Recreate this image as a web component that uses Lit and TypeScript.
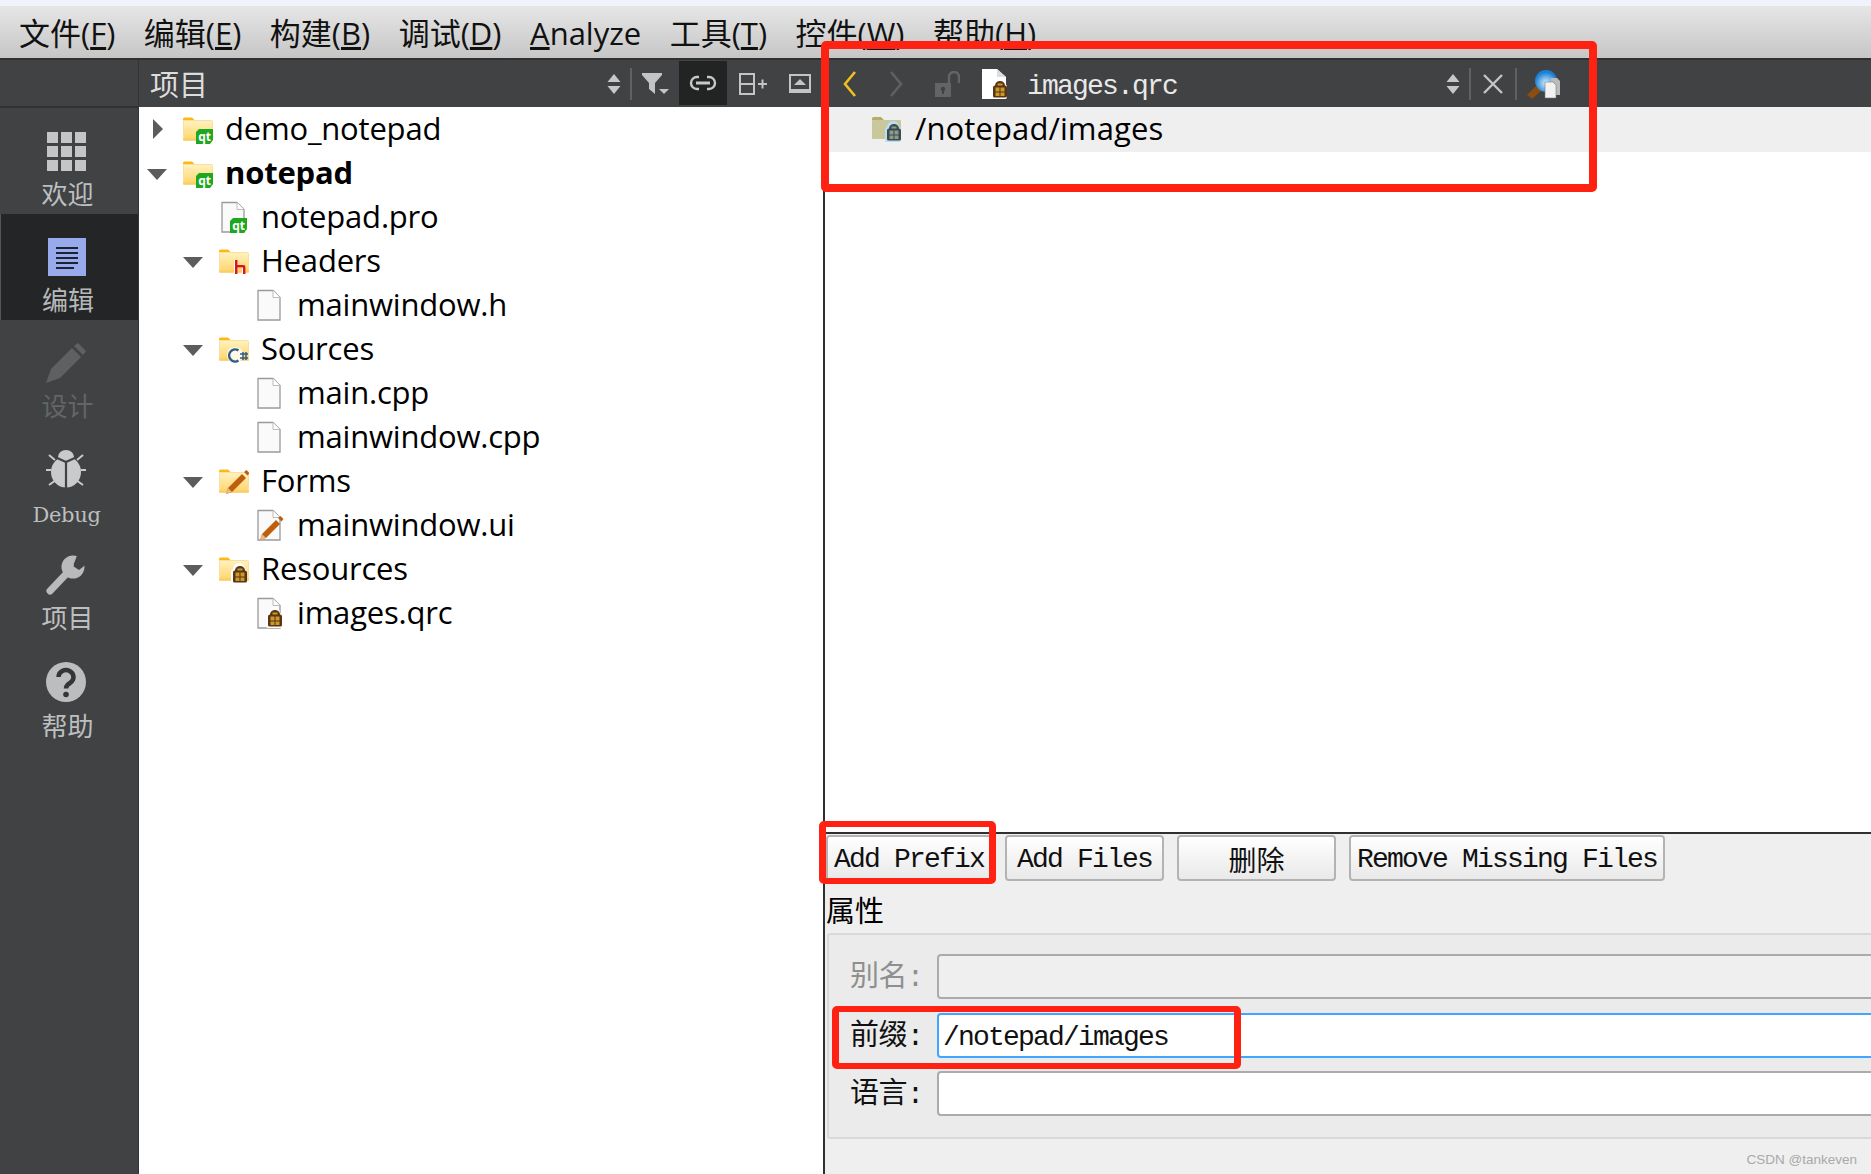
import { LitElement, html, css, svg } from "lit";
import { customElement } from "lit/decorators.js";

const badge = (x: number, y: number, dark = "#5b3413", pane = "#c79a2a", halo = "#fff") => svg`
  <g transform="translate(${x} ${y})">
    <path d="M-1 17V7a3 3 0 0 1 2-3 6 6 0 0 1 12 0 3 3 0 0 1 2 3v10a2 2 0 0 1-2 2H1a2 2 0 0 1-2-2z" fill=${halo}/>
    <path d="M1 16V7.500a2 2 0 0 1 2-2 5 4.500 0 0 1 10 0 2 2 0 0 1 2 2V16a1.500 1.500 0 0 1-1.500 1.500h-11A1.500 1.500 0 0 1 1 16z" fill=${dark}/>
    <rect x="3.500" y="7.500" width="4" height="4" fill=${pane}/><rect x="8.500" y="7.500" width="4" height="4" fill=${pane}/>
    <rect x="3.500" y="12.500" width="4" height="3.500" fill=${pane}/><rect x="8.500" y="12.500" width="4" height="3.500" fill=${pane}/>
    <rect x="5.500" y="3.500" width="5" height="2" fill=${pane}/>
  </g>`;

const qt = (x: number, y: number) => svg`
  <g transform="translate(${x} ${y})">
    <path d="M3 0h14v11l-3 4H0V3z" fill="#1fa81f"/>
    <text x="8.500" y="11.500" font-size="12" font-weight="700" text-anchor="middle" fill="#fff" font-family="Open Sans, sans-serif">qt</text>
  </g>`;

const folderBase = (inner = svg``) => svg`
  <svg class="ficon" width="30" height="30" viewBox="0 0 30 30">
    <defs><linearGradient id="fg" x1="0" y1="0" x2="0" y2="1"><stop offset="0" stop-color="#fff2c0"/><stop offset="1" stop-color="#ffd468"/></linearGradient></defs>
    <path d="M0 5a1.500 1.500 0 0 1 1.500-1.500H9l3 3H0z" fill="#fdb913"/>
    <rect x="0.500" y="6.500" width="29" height="20" rx="1" fill="url(#fg)" stroke="#fbdf9a"/>
    <rect x="0" y="24.500" width="30" height="2" fill="#f8cf62"/>
    ${inner}
  </svg>`;

const docBase = (inner = svg``) => svg`
  <svg class="ficon doc" width="28" height="32" viewBox="0 0 28 32">
    <path d="M1 1.500h15l7 7V31H1z" fill="#fafafa" stroke="#9a9a9a" stroke-width="1.300"/>
    <path d="M16 1.500v7h7" fill="#fff" stroke="#bdbdbd"/>
    ${inner}
  </svg>`;

const pen = (x: number, y: number) => svg`
  <g transform="translate(${x} ${y})">
    <path d="M0 24l2-6L16 4l4 4L6 22z" fill="#bf5f0c"/>
    <path d="M18 2l2.500-2 3 3-2 2.500z" fill="#bf5f0c"/>
    <path d="M0 24l2-6 4 4z" fill="#e9b98a"/>
  </g>`;

const ICONS: Record<string, unknown> = {
  qtfolder: folderBase(qt(13, 15)),
  hfolder: folderBase(svg`<path d="M15 27V14h3.500v13zM18 19h6.500a2 2 0 0 1 2 2v6H23v-5h-5z" fill="#fff"/><path d="M16 28V14h2.500v5h6a2 2 0 0 1 2 2v7H24v-6.500h-5.500V28z" fill="#e01414"/>`),
  cfolder: folderBase(svg`
    <circle cx="16" cy="21" r="8" fill="#fff" opacity=".8"/>
    <path d="M19.500 16.500a6 6 0 1 0 0 10" fill="none" stroke="#2f5f88" stroke-width="2.500"/>
    <path d="M21 20h8M21 24h8M24 18v8M27 18v8" stroke="#2f5f88" stroke-width="1.500"/>`),
  formfolder: folderBase(pen(7, 4)),
  resfolder: folderBase(badge(13, 11)),
  doc: docBase(),
  qtdoc: docBase(qt(9, 17)),
  uidoc: docBase(pen(3, 7)),
  qrcdoc: docBase(svg`<g transform="translate(10 12)">${badge(0, 0)}</g>`),
};

const tree = [
  { t: "demo_notepad", l: 0, i: "qtfolder", a: "r" },
  { t: "notepad", l: 0, i: "qtfolder", a: "d", b: true },
  { t: "notepad.pro", l: 1, i: "qtdoc" },
  { t: "Headers", l: 1, i: "hfolder", a: "d" },
  { t: "mainwindow.h", l: 2, i: "doc" },
  { t: "Sources", l: 1, i: "cfolder", a: "d" },
  { t: "main.cpp", l: 2, i: "doc" },
  { t: "mainwindow.cpp", l: 2, i: "doc" },
  { t: "Forms", l: 1, i: "formfolder", a: "d" },
  { t: "mainwindow.ui", l: 2, i: "uidoc" },
  { t: "Resources", l: 1, i: "resfolder", a: "d" },
  { t: "images.qrc", l: 2, i: "qrcdoc" },
];

const grid = () => {
  const out = [];
  for (let r = 0; r < 3; r++) for (let c = 0; c < 3; c++)
    out.push(svg`<rect x=${1 + c * 14} y=${1 + r * 14} width="11" height="11" fill="#c4c5c6"/>`);
  return svg`<svg width="40" height="40" viewBox="0 0 40 40">${out}</svg>`;
};
const editIcon = svg`<svg width="40" height="40" viewBox="0 0 40 40">
  <rect x="1" y="1" width="38" height="38" fill="#98a9ec"/>
  <path d="M9 11h22M9 16h22M9 21h22M9 26h22M9 31h18" stroke="#1d2230" stroke-width="2"/></svg>`;
const penIcon = svg`<svg width="40" height="40" viewBox="0 0 40 40">
  <path d="M0 40l5-14L26 5l9 9-21 21z" fill="#5f6062"/><path d="M28 3l4-3 8 8-3 4z" fill="#5f6062"/></svg>`;
const bugIcon = svg`<svg width="40" height="40" viewBox="0 0 40 40">
  <path d="M3 6l6 5M37 6l-6 5M0 21h5M35 21h5M3 36l7-5M37 36l-7-5" stroke="#c9cacb" stroke-width="2"/>
  <ellipse cx="20" cy="23" rx="15" ry="15.500" fill="#c9cacb"/>
  <ellipse cx="20" cy="8" rx="8" ry="7" fill="#c9cacb"/>
  <path d="M20 13v26M20 13L9 8M20 13l11-5" stroke="#404244" stroke-width="2.200" fill="none"/></svg>`;
const wrenchIcon = svg`<svg width="40" height="40" viewBox="0 0 40 40">
  <path d="M4 36L22 17" stroke="#b9babb" stroke-width="7" stroke-linecap="round"/>
  <circle cx="27" cy="12" r="11.500" fill="#b9babb"/>
  <path d="M27 11L32 -2H42V8L33 15z" fill="#404244"/><path d="M26 12l-1-10 3 9z" fill="#b9babb"/></svg>`;
const helpIcon = svg`<svg width="40" height="42" viewBox="0 0 40 42">
  <circle cx="20" cy="21" r="20" fill="#bcbdbe"/>
  <path d="M12.500 16a7.500 7 0 1 1 11.500 6c-2.500 1.500-4 2.500-4 5.500" fill="none" stroke="#343537" stroke-width="4.500"/>
  <circle cx="20" cy="33.500" r="2.800" fill="#343537"/></svg>`;

const nav = [
  { t: "欢迎", i: grid() },
  { t: "编辑", i: editIcon, sel: true },
  { t: "设计", i: penIcon, off: true },
  { t: "Debug", i: bugIcon },
  { t: "项目", i: wrenchIcon },
  { t: "帮助", i: helpIcon },
];

const arrows = svg`<svg class="arrows" width="14" height="20" viewBox="0 0 14 20"><path d="M7 0l6.500 8H.5zM7 20l6.500-8H.5z" fill="#c8c8c8"/></svg>`;

const menu = [
  ["文件(", "F", ")"], ["编辑(", "E", ")"], ["构建(", "B", ")"], ["调试(", "D", ")"],
  ["", "A", "nalyze"], ["工具(", "T", ")"], ["控件(", "W", ")"], ["帮助(", "H", ")"],
];

@customElement("app-root")
export class AppRoot extends LitElement {
  static styles = css`
    :host { display: block; position: relative; width: 1871px; height: 1174px; overflow: hidden; background: #fff;
      font-family: "Open Sans", "Noto Sans CJK SC", sans-serif; color: #000; }
    .strip { height: 6px; background: #eff3fb; }
    .menubar { height: 52px; box-sizing: border-box; display: flex; gap: 28.500px; padding-left: 19px; align-items: flex-start;
      background: linear-gradient(#e6e6e6, #c6c6c6); font-size: 31px; line-height: 54px; color: #111; white-space: nowrap; }
    .main { display: flex; height: 1114px; border-top: 2px solid #2f3031; box-sizing: content-box; }
    .side { width: 139px; flex: none; background: #404244; box-sizing: border-box; border-right: 1px solid #333; }
    .sidehead { height: 48px; box-sizing: border-box; border-bottom: 2px solid #303132; }
    .item { height: 106px; box-sizing: border-box; padding: 23px 6px 0 0; display: flex; flex-direction: column; align-items: center; }
    .item svg { display: block; flex: none; }
    .item span { margin: 11px 0 0 3px; font-size: 26px; line-height: 30px; color: #bdbebf; font-family: "Liberation Mono", "Noto Sans CJK SC", serif; }
    .item span.latin { font-family: "DejaVu Serif", serif; font-size: 21px; letter-spacing: -.3px; margin-left: 1px; }
    .item.sel { background: #232526; border-left: 1px solid #555; }
    .item.sel span { color: #b6b7b8; }
    .item.off span { color: #646566; }
    .left { width: 684px; flex: none; display: flex; flex-direction: column; border-right: 2px solid #2f3031; }
    .bar { height: 47px; flex: none; display: flex; align-items: center; background: #404244; color: #e4e4e4; box-sizing: border-box; }
    .title { flex: 1; padding-left: 11px; margin-top: -2px; font-size: 29px; color: #dcdcdc; }
    .bar svg { display: block; flex: none; }
    .sep { width: 2px; height: 32px; background: #5f6163; flex: none; }
    .ml10 { margin-left: 10px; } .ml12 { margin-left: 12px; } .ml22 { margin-left: 22px; } .ml21 { margin-left: 21px; }
    .ml9 { margin-left: 9px; } .ml18 { margin-left: 18px; } .ml32 { margin-left: 32px; }
    .linkbtn { width: 48px; height: 44px; background: #222424; margin-top: -1px; display: flex; align-items: center; justify-content: center; flex: none; }
    .tree { flex: 1; background: #fff; padding-left: 8px; }
    .row { height: 44px; display: flex; align-items: center; font-size: 31px; white-space: nowrap; letter-spacing: -.2px; }
    .row span { margin-top: -2px; }
    .row.l1 { margin-left: 36px; } .row.l2 { margin-left: 72px; }
    .row.bold { font-weight: 700; }
    .tw { width: 20px; height: 14px; flex: none; margin-right: 16px; display: flex; justify-content: center; }
    .ar-r { margin-top: -3px; }
    .ar-d { margin-top: 3px; }
    .iconbox { width: 30px; flex: none; display: flex; justify-content: flex-start; margin-right: 12px; }
    .ficon { display: block; }
    .doc { margin-left: 2px; }
    .right { flex: 1; min-width: 0; display: flex; flex-direction: column; }
    .file { width: 419px; flex: none; margin-left: 16px; padding-top: 5px; font-family: "Liberation Mono", monospace; font-size: 28px; letter-spacing: -1.800px; color: #e8e8e8; }
    .prefix { height: 45px; flex: none; background: #efefef; display: flex; align-items: center; padding-left: 47px; font-size: 31px; letter-spacing: .1px; white-space: nowrap; }
    .prefix span { margin-top: -3px; }
    .prefix svg { display: block; margin-right: 13px; flex: none; }
    .space { flex: 1; background: #fff; }
    .panel { height: 342px; flex: none; box-sizing: border-box; border-top: 2px solid #2f3031; background: #efefef; padding: 1px 0 0 1px; }
    .btns { display: flex; gap: 13px; height: 46px; }
    button { box-sizing: border-box; height: 46px; min-width: 159px; padding: 2px 6px 0; margin: 0; border: 2px solid #b3b3b3; border-radius: 4px;
      background: linear-gradient(#fff, #e9e9e9); font-family: "Liberation Mono", "Noto Sans CJK SC", monospace; font-size: 28px; letter-spacing: -1.800px; color: #111; white-space: nowrap; }
    .cjkbtn { font-size: 28px; letter-spacing: 0; }
    .heading { margin-top: 8px; height: 40px; line-height: 40px; font-size: 29px; font-family: "Noto Sans CJK SC", sans-serif; font-weight: 400; }
    .group { margin: 4px -20px 0 1px; height: 206px; box-sizing: border-box; padding: 19px 0 0 21px; background: #ebebeb; border: 2px solid #d9d9d9; border-radius: 3px;
      display: grid; grid-template-columns: 87px 1fr; grid-auto-rows: 45px; row-gap: 13.500px; align-items: center; }
    label { font-family: "Liberation Mono", "Noto Sans CJK SC", monospace; font-size: 29px; color: #111; letter-spacing: -.6px; line-height: 1; margin-top: 4px; }
    label.dim { color: #8f8f8f; }
    .input { height: 45px; box-sizing: border-box; border: 2px solid #ababab; border-radius: 4px; background: #fff; padding: 2px 4px 0;
      font-family: "Liberation Mono", monospace; font-size: 28px; letter-spacing: -1.800px; line-height: 41px; color: #111; white-space: nowrap; }
    .input.dis { background: #efefef; }
    .input.focus { border-color: #3fa7ff; }
    .mark { position: absolute; border-style: solid; border-color: #ff2213; box-sizing: border-box; pointer-events: none; }
    .m1 { left: 821px; top: 41px; width: 776px; height: 151px; border-width: 8px; border-radius: 5px; }
    .m2 { left: 819px; top: 821px; width: 177px; height: 63px; border-width: 6px 7px; border-radius: 5px; }
    .m3 { left: 832px; top: 1006px; width: 409px; height: 63px; border-width: 6px 7px; border-radius: 5px; }
    .wm { position: absolute; right: 14px; top: 1152px; font-family: "Liberation Sans", sans-serif; font-size: 13.500px; color: #a9a9a9; }
  `;

  render() {
    return html`
      <div class="strip"></div>
      <div class="menubar">
        ${menu.map((m) => html`<span>${m[0]}<u>${m[1]}</u>${m[2]}</span>`)}
      </div>
      <div class="main">
        <div class="side">
          <div class="sidehead"></div>
          ${nav.map((n) => html`<div class="item ${n.sel ? "sel" : ""} ${n.off ? "off" : ""}">${n.i}<span class=${n.t === "Debug" ? "latin" : ""}>${n.t}</span></div>`)}
        </div>
        <div class="left">
          <div class="bar">
            <div class="title">项目</div>
            ${arrows}
            <div class="sep ml9"></div>
            <svg class="ml10" width="27" height="22" viewBox="0 0 27 22"><path d="M0 0h20v2l-7 8v11l-6-5v-6L0 2z" fill="#c4c4c4"/><path d="M17 16h10l-5 5z" fill="#c4c4c4"/></svg>
            <div class="linkbtn ml10">
              <svg width="28" height="16" viewBox="0 0 28 16"><path d="M10 2H8a6 6 0 0 0 0 12h2M18 2h2a6 6 0 0 1 0 12h-2" fill="none" stroke="#c8c8c8" stroke-width="2.400"/><rect x="7" y="6.500" width="14" height="3" fill="#c8c8c8"/></svg>
            </div>
            <svg class="ml12" width="28" height="22" viewBox="0 0 28 22"><path d="M1 1h14v20H1zM1 11h14" fill="none" stroke="#c4c4c4" stroke-width="2"/><path d="M19 11h9M23.500 6.500v9" stroke="#c4c4c4" stroke-width="2"/></svg>
            <svg class="ml22" width="22" height="19" viewBox="0 0 22 19"><rect width="22" height="19" fill="#c4c4c4"/><rect x="2" y="2" width="18" height="13" fill="#404244"/><path d="M11 5l6 6H5z" fill="#c4c4c4"/></svg>
            <div class="ml12"></div>
          </div>
          <div class="tree">
            ${tree.map((r) => html`<div class="row l${r.l} ${r.b ? "bold" : ""}">
              <div class="tw">${r.a === "r"
                ? html`<svg class="ar-r" width="11" height="20" viewBox="0 0 11 20"><path d="M1 0l10 10L1 20z" fill="#5c5c5c"/></svg>`
                : r.a === "d"
                ? html`<svg class="ar-d" width="20" height="11" viewBox="0 0 20 11"><path d="M0 0h20L10 11z" fill="#5c5c5c"/></svg>`
                : ""}</div>
              <div class="iconbox">${ICONS[r.i]}</div>
              <span>${r.t}</span>
            </div>`)}
          </div>
        </div>
        <div class="right">
          <div class="bar">
            <svg class="ml18" width="14" height="26" viewBox="0 0 14 26"><path d="M12 1L2 13l10 12" fill="none" stroke="#f2c01e" stroke-width="2.600"/></svg>
            <svg class="ml32" width="14" height="26" viewBox="0 0 14 26"><path d="M2 1l10 12L2 25" fill="none" stroke="#5f6062" stroke-width="2.600"/></svg>
            <svg class="ml32" width="25" height="26" viewBox="0 0 25 26"><rect y="12" width="16" height="14" fill="#636465"/><circle cx="8" cy="18" r="2.200" fill="#404244"/><rect x="7" y="18" width="2" height="5" fill="#404244"/><path d="M14 12V6a5 5 0 0 1 10 0v6" fill="none" stroke="#636465" stroke-width="2.400"/></svg>
            <svg class="ml21" width="30" height="32" viewBox="0 0 30 32"><path d="M1 1h15l9 8v22H1z" fill="#fff"/><path d="M16 1v8h9" fill="#ddd"/>${badge(11, 12)}</svg>
            <div class="file">images.qrc</div>
            ${arrows}
            <div class="sep ml9"></div>
            <svg class="ml12" width="20" height="20" viewBox="0 0 20 20"><path d="M1 1l18 18M19 1L1 19" stroke="#c4c4c4" stroke-width="2.400"/></svg>
            <div class="sep ml12"></div>
            <svg class="ml10" width="34" height="30" viewBox="0 0 34 30">
              <defs><radialGradient id="gl" cx=".5" cy=".6"><stop offset="0" stop-color="#d9f2ff"/><stop offset="1" stop-color="#1c7fd4"/></radialGradient></defs>
              <path d="M0 26l9-9 5 5-9 8z" fill="#8a4d12"/>
              <circle cx="19" cy="12" r="11" fill="url(#gl)"/>
              <path d="M24 9h6l3 3v14h-9z" fill="#bbb"/><path d="M18 13h8l3 3v13H18z" fill="#f2f2f2" stroke="#777" stroke-width=".6"/>
            </svg>
          </div>
          <div class="prefix">
            <svg width="30" height="32" viewBox="0 0 30 32">
              <path d="M0 4.500A1.500 1.500 0 0 1 1.500 3H9l3 3H0z" fill="#b5ab6a"/>
              <rect y="6" width="29" height="19" rx="1" fill="#c8c89a"/>
              ${badge(14, 9, "#3b4a52", "#8c9a86", "#bcdcf4")}
            </svg>
            <span>/notepad/images</span>
          </div>
          <div class="space"></div>
          <div class="panel">
            <div class="btns">
              <button>Add Prefix</button>
              <button>Add Files</button>
              <button class="cjkbtn">删除</button>
              <button>Remove Missing Files</button>
            </div>
            <div class="heading">属性</div>
            <div class="group">
              <label class="dim">别名:</label><div class="input dis"></div>
              <label>前缀:</label><div class="input focus">/notepad/images</div>
              <label>语言:</label><div class="input"></div>
            </div>
          </div>
        </div>
      </div>
      <div class="mark m1"></div>
      <div class="mark m2"></div>
      <div class="mark m3"></div>
      <div class="wm">CSDN @tankeven</div>
    `;
  }
}
